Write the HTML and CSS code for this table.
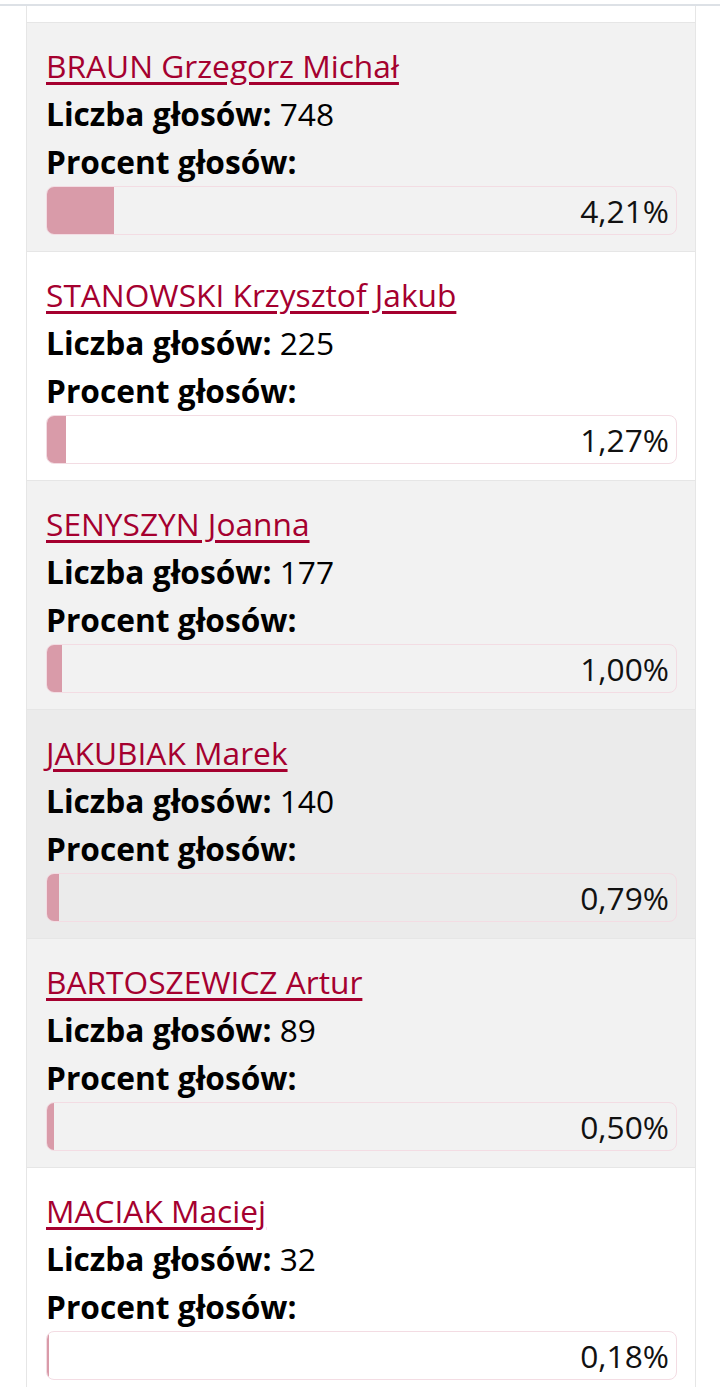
FILE: index.html
```html
<!DOCTYPE html>
<html lang="pl">
<head>
<meta charset="UTF-8">
<meta name="viewport" content="width=device-width, initial-scale=1.0">
<title>Wyniki głosowania</title>
<link rel="stylesheet" href="styles.css">
</head>
<body>

<div class="topbar"></div>

<div class="results">
    <!-- tail of the previous row, scrolled out of view -->
    <div class="candidate partial">
        <div class="bar"><div class="fill" style="width: 6.5%"></div></div>
    </div>

    <div class="candidate grey">
        <a href="#" class="name">BRAUN Grzegorz Michał</a>
        <div class="line"><b>Liczba głosów:</b> 748</div>
        <div class="line"><b>Procent głosów:</b></div>
        <div class="bar"><div class="fill" style="width: 10.78%"></div><span class="pct">4,21%</span></div>
    </div>

    <div class="candidate">
        <a href="#" class="name">STANOWSKI Krzysztof Jakub</a>
        <div class="line"><b>Liczba głosów:</b> 225</div>
        <div class="line"><b>Procent głosów:</b></div>
        <div class="bar"><div class="fill" style="width: 3.25%"></div><span class="pct">1,27%</span></div>
    </div>

    <div class="candidate grey">
        <a href="#" class="name">SENYSZYN Joanna</a>
        <div class="line"><b>Liczba głosów:</b> 177</div>
        <div class="line"><b>Procent głosów:</b></div>
        <div class="bar"><div class="fill" style="width: 2.56%"></div><span class="pct">1,00%</span></div>
    </div>

    <div class="candidate active">
        <a href="#" class="name">JAKUBIAK Marek</a>
        <div class="line"><b>Liczba głosów:</b> 140</div>
        <div class="line"><b>Procent głosów:</b></div>
        <div class="bar"><div class="fill" style="width: 2.02%"></div><span class="pct">0,79%</span></div>
    </div>

    <div class="candidate grey">
        <a href="#" class="name">BARTOSZEWICZ Artur</a>
        <div class="line"><b>Liczba głosów:</b> 89</div>
        <div class="line"><b>Procent głosów:</b></div>
        <div class="bar"><div class="fill" style="width: 1.28%"></div><span class="pct">0,50%</span></div>
    </div>

    <div class="candidate">
        <a href="#" class="name">MACIAK Maciej</a>
        <div class="line"><b>Liczba głosów:</b> 32</div>
        <div class="line"><b>Procent głosów:</b></div>
        <div class="bar"><div class="fill" style="width: 0.46%"></div><span class="pct">0,18%</span></div>
    </div>
</div>

</body>
</html>
```

FILE: styles.css
```css
body {
    font-family: "Open Sans", "DejaVu Sans", sans-serif;
    background-color: #fff;
    color: #000;
    margin: 0;
    padding: 0;
    overflow: hidden;
}
.topbar {
    position: fixed;
    top: 0;
    left: 0;
    right: 0;
    height: 4px;
    background-color: #fff;
    border-bottom: 2px solid #dde1e6;
    z-index: 2;
}
.results {
    width: 670px;
    margin: 0 0 0 26px;
    box-sizing: border-box;
    border-left: 1px solid #e6e6e6;
    border-right: 1px solid #e6e6e6;
}
.candidate {
    padding: 19px 18px 16px 19px;
    background-color: #fff;
    border-bottom: 1px solid #e6e6e6;
    font-size: 31.7px;
    line-height: 48px;
}
.candidate.partial {
    margin-top: -62px;
}
.candidate.grey {
    background-color: #f2f2f2;
}
.candidate.active {
    background-color: #ebebeb;
}
.name {
    display: block;
    color: #a5002f;
    text-decoration: underline;
    text-underline-offset: 4px;
}
.line b {
    font-weight: 700;
}
.bar {
    display: flex;
    align-items: center;
    height: 49px;
    box-sizing: border-box;
    border: 1px solid #f3dce3;
    border-radius: 8px;
    overflow: hidden;
}
.fill {
    align-self: stretch;
    margin: -1px 0 -1px -1px;
    background-color: #d99ba9;
}
.pct {
    margin-left: auto;
    padding-right: 7px;
    color: #111;
}
```
